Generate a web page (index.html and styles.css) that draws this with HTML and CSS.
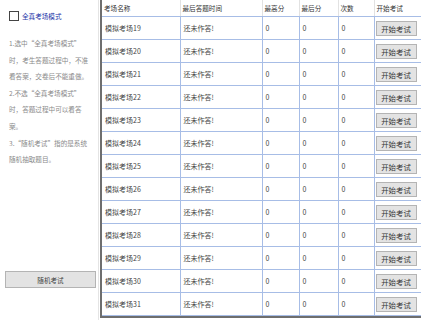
FILE: index.html
```html
<!DOCTYPE html>
<html lang="zh">
<head>
<meta charset="utf-8">
<link rel="stylesheet" href="styles.css">
</head>
<body>
<div class="page">
  <aside class="side">
    <label class="mode"><span class="box"></span><span class="mode-text">全真考场模式</span></label>
    <div class="notes">
      <div>1.选中“全真考场模式”</div>
      <div>时，考生答题过程中，不准</div>
      <div>看答案，交卷后不能重做。</div>
      <div>2.不选“全真考场模式”</div>
      <div>时，答题过程中可以看答</div>
      <div>案。</div>
      <div>3.“随机考试”指的是系统</div>
      <div>随机抽取题目。</div>
    </div>
    <div class="spacer"></div>
    <button class="rand">随机考试</button>
  </aside>
  <main class="grid-wrap">
    <table class="grid">
      <colgroup>
        <col class="c1"><col class="c2"><col class="c3"><col class="c4"><col class="c5"><col class="c6">
      </colgroup>
      <thead>
        <tr><th>考场名称</th><th>最后答题时间</th><th>最高分</th><th>最后分</th><th>次数</th><th>开始考试</th></tr>
      </thead>
      <tbody>
        <tr><td>模拟考场19</td><td>还未作答!</td><td>0</td><td>0</td><td>0</td><td><button class="go">开始考试</button></td></tr>
        <tr><td>模拟考场20</td><td>还未作答!</td><td>0</td><td>0</td><td>0</td><td><button class="go">开始考试</button></td></tr>
        <tr><td>模拟考场21</td><td>还未作答!</td><td>0</td><td>0</td><td>0</td><td><button class="go">开始考试</button></td></tr>
        <tr><td>模拟考场22</td><td>还未作答!</td><td>0</td><td>0</td><td>0</td><td><button class="go">开始考试</button></td></tr>
        <tr><td>模拟考场23</td><td>还未作答!</td><td>0</td><td>0</td><td>0</td><td><button class="go">开始考试</button></td></tr>
        <tr><td>模拟考场24</td><td>还未作答!</td><td>0</td><td>0</td><td>0</td><td><button class="go">开始考试</button></td></tr>
        <tr><td>模拟考场25</td><td>还未作答!</td><td>0</td><td>0</td><td>0</td><td><button class="go">开始考试</button></td></tr>
        <tr><td>模拟考场26</td><td>还未作答!</td><td>0</td><td>0</td><td>0</td><td><button class="go">开始考试</button></td></tr>
        <tr><td>模拟考场27</td><td>还未作答!</td><td>0</td><td>0</td><td>0</td><td><button class="go">开始考试</button></td></tr>
        <tr><td>模拟考场28</td><td>还未作答!</td><td>0</td><td>0</td><td>0</td><td><button class="go">开始考试</button></td></tr>
        <tr><td>模拟考场29</td><td>还未作答!</td><td>0</td><td>0</td><td>0</td><td><button class="go">开始考试</button></td></tr>
        <tr><td>模拟考场30</td><td>还未作答!</td><td>0</td><td>0</td><td>0</td><td><button class="go">开始考试</button></td></tr>
        <tr><td>模拟考场31</td><td>还未作答!</td><td>0</td><td>0</td><td>0</td><td><button class="go">开始考试</button></td></tr>
      </tbody>
    </table>
  </main>
</div>
</body>
</html>
```
FILE: styles.css
```css
html, body {
  margin: 0;
  padding: 0;
  background: #fff;
}
body {
  font-family: "Noto Sans CJK SC", "Noto Sans", sans-serif;
  font-size: 7px;
  color: #444;
}
.page {
  display: flex;
  width: 424px;
  height: 320px;
  overflow: hidden;
}
.side {
  width: 99px;
  flex: none;
  border-right: 1px solid #e4e4e4;
  display: flex;
  flex-direction: column;
  padding: 11px 0 32px 0;
  box-sizing: border-box;
}
.mode {
  display: flex;
  align-items: center;
  gap: 3px;
  padding-left: 9px;
  height: 10px;
}
.box {
  width: 8px;
  height: 8px;
  border: 1px solid #444;
  background: #fff;
}
.mode-text {
  color: #1c34a8;
  font-size: 6.6px;
}
.notes {
  margin-top: 14px;
  padding-left: 9px;
  color: #8a8a8a;
  font-size: 6.6px;
  line-height: 16.6px;
}
.spacer {
  flex: 1;
}
.rand {
  margin: 0 2px 0 5px;
  height: 17px;
  border: 1px solid #b4b4b4;
  background: #e3e3e3;
  font-family: inherit;
  font-size: 6.6px;
  color: #444;
  padding: 0;
}
.grid-wrap {
  margin-left: 1px;
  border-left: 2px solid #6e6e6e;
  border-bottom: 2px solid #6e6e6e;
  height: 318px;
  width: 321px;
  box-sizing: border-box;
  overflow: hidden;
}
.grid {
  border-collapse: collapse;
  table-layout: fixed;
  width: 320px;
}
.c1 { width: 78px; }
.c2 { width: 82px; }
.c3 { width: 37px; }
.c4 { width: 39px; }
.c5 { width: 36px; }
.c6 { width: 48px; }
th {
  height: 16px;
  font-weight: normal;
  text-align: left;
  padding: 0 0 0 2px;
  color: #333;
  font-size: 6.6px;
  border-left: 1px solid #e2e2e2;
  border-bottom: 1px solid #a7bde6;
}
th:first-child { border-left: none; }
td {
  height: 22px;
  padding: 0 0 0 3px;
  border: 1px solid #a7bde6;
  color: #444;
  font-size: 7px;
  white-space: nowrap;
}
td:first-child { border-left: none; }
td:last-child { padding-left: 1px; }
.go {
  width: 41px;
  height: 15px;
  border: 1px solid #b4b4b4;
  background: #e3e3e3;
  font-family: inherit;
  font-size: 7.4px;
  color: #333;
  padding: 0;
  display: block;
}
```
